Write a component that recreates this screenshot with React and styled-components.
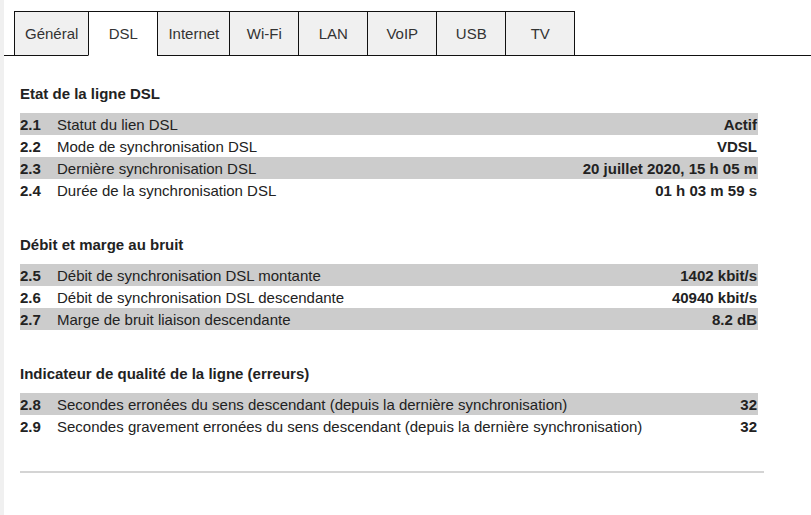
import React from "react";
import styled, { createGlobalStyle } from "styled-components";

const GlobalStyle = createGlobalStyle`
  html, body {
    margin: 0;
    padding: 0;
    background: #fff;
    font-family: "Liberation Sans", Arial, sans-serif;
    color: #222;
  }
`;

const Page = styled.div`
  display: flex;
  min-height: 515px;
`;

const SideStrip = styled.div`
  width: 4px;
  flex-shrink: 0;
  background: #f0f0f0;
`;

const Main = styled.div`
  flex: 1;
  padding-top: 11px;
`;

const TabBar = styled.div`
  display: flex;
  height: 44px;
  padding-left: 10px;
  border-bottom: 1px solid #111;
`;

const Tab = styled.div`
  box-sizing: border-box;
  height: 45px;
  min-width: 70px;
  padding: 0 10px;
  margin-left: -1px;
  margin-bottom: -1px;
  display: flex;
  align-items: center;
  justify-content: center;
  font-size: 15px;
  color: #333;
  border: 1px solid #111;
  border-bottom-color: ${(p) => (p.$active ? "#fff" : "#111")};
  background: ${(p) => (p.$active ? "#fff" : "#f0f0f0")};
  cursor: pointer;

  &:first-child {
    margin-left: 0;
  }
`;

const Content = styled.div`
  padding: 28px 0 0 16px;
  width: 738px;
`;

const Section = styled.section`
  margin-bottom: 34px;
`;

const SectionTitle = styled.h2`
  margin: 0 0 9px;
  font-size: 15px;
  line-height: 20px;
  font-weight: bold;
  color: #222;
`;

const Row = styled.div`
  display: flex;
  align-items: center;
  height: 22px;
  font-size: 15px;
  background: ${(p) => (p.$striped ? "#cccccc" : "transparent")};
`;

const RowNum = styled.span`
  width: 37px;
  font-weight: bold;
`;

const RowLabel = styled.span`
  flex: 1;
`;

const RowValue = styled.span`
  font-weight: bold;
  padding-right: 1px;
`;

const Divider = styled.hr`
  margin: 0 0 0 16px;
  width: 744px;
  border: none;
  border-top: 2px solid #d4d4d4;
`;

const tabs = ["Général", "DSL", "Internet", "Wi-Fi", "LAN", "VoIP", "USB", "TV"];

const sections = [
  {
    title: "Etat de la ligne DSL",
    rows: [
      ["2.1", "Statut du lien DSL", "Actif"],
      ["2.2", "Mode de synchronisation DSL", "VDSL"],
      ["2.3", "Dernière synchronisation DSL", "20 juillet 2020, 15 h 05 m"],
      ["2.4", "Durée de la synchronisation DSL", "01 h 03 m 59 s"],
    ],
  },
  {
    title: "Débit et marge au bruit",
    rows: [
      ["2.5", "Débit de synchronisation DSL montante", "1402 kbit/s"],
      ["2.6", "Débit de synchronisation DSL descendante", "40940 kbit/s"],
      ["2.7", "Marge de bruit liaison descendante", "8.2 dB"],
    ],
  },
  {
    title: "Indicateur de qualité de la ligne (erreurs)",
    rows: [
      ["2.8", "Secondes erronées du sens descendant (depuis la dernière synchronisation)", "32"],
      ["2.9", "Secondes gravement erronées du sens descendant (depuis la dernière synchronisation)", "32"],
    ],
  },
];

export default function App() {
  return (
    <>
      <GlobalStyle />
      <Page>
        <SideStrip />
        <Main>
          <TabBar>
            {tabs.map((t) => (
              <Tab key={t} $active={t === "DSL"}>
                {t}
              </Tab>
            ))}
          </TabBar>
          <Content>
            {sections.map((s) => (
              <Section key={s.title}>
                <SectionTitle>{s.title}</SectionTitle>
                {s.rows.map(([num, label, value], i) => (
                  <Row key={num} $striped={i % 2 === 0}>
                    <RowNum>{num}</RowNum>
                    <RowLabel>{label}</RowLabel>
                    <RowValue>{value}</RowValue>
                  </Row>
                ))}
              </Section>
            ))}
          </Content>
          <Divider />
        </Main>
      </Page>
    </>
  );
}
